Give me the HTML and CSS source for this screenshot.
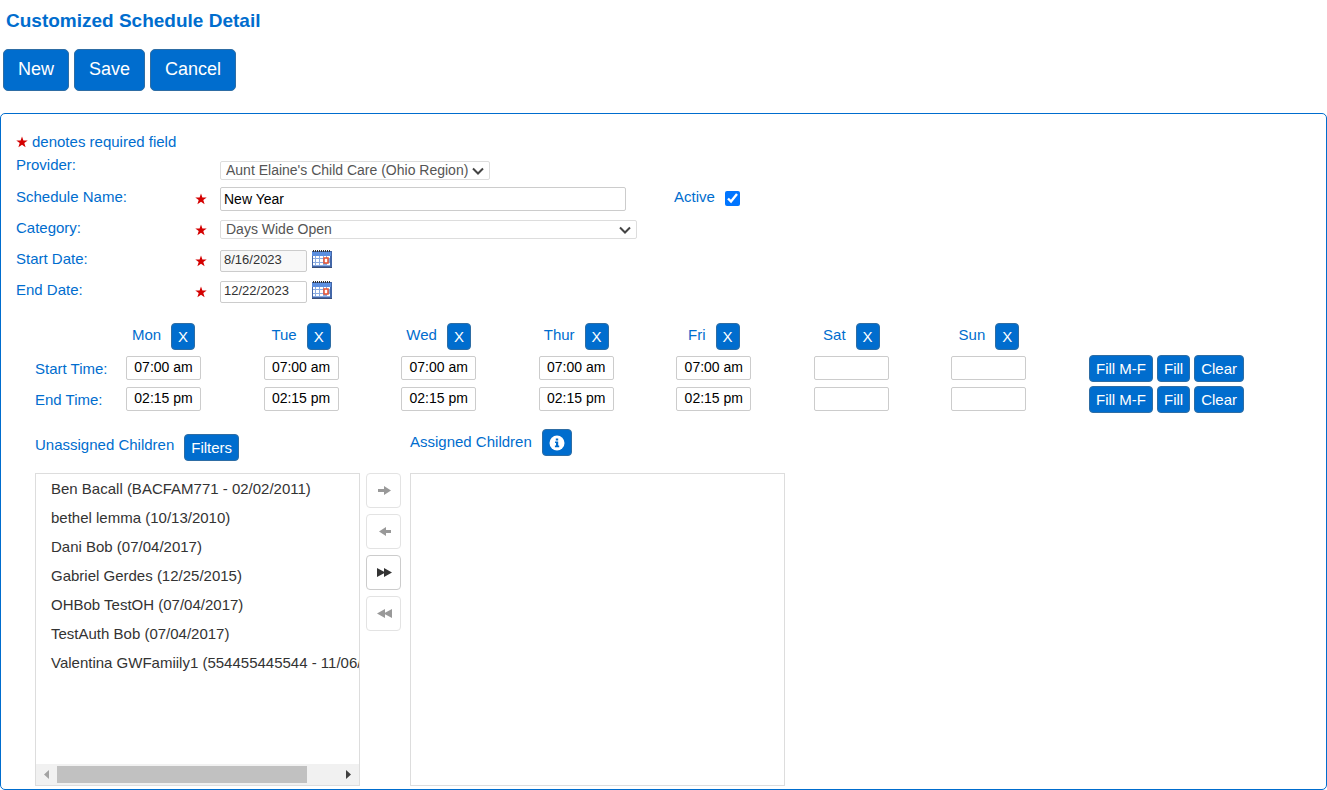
FILE: index.html
```html
<!DOCTYPE html>
<html lang="en">
<head>
  <meta charset="UTF-8" />
  <meta name="viewport" content="width=device-width, initial-scale=1.0"/>
  <title>Customized Schedule Detail</title>
  <link rel="stylesheet" href="styles.css">
</head>
<body>

<!-- shared icons -->
<svg class="sprite" aria-hidden="true">
  <symbol id="star" viewBox="0 0 12 12">
    <path fill="#d40000" d="M6 0.5 L7.4 4.4 L11.7 4.5 L8.3 7 L9.6 11.2 L6 8.7 L2.4 11.2 L3.7 7 L0.3 4.5 L4.6 4.4 Z"/>
  </symbol>
  <symbol id="calendar" viewBox="0 0 20 18">
    <rect x="0" y="1" width="20" height="17" fill="#4467a8"/>
    <rect x="0" y="2" width="19" height="4" fill="#5b8fe0"/>
    <rect x="1" y="6" width="17" height="10" fill="#8aabe0"/>
    <path fill="#fff" d="M1 6h2v2H1z M4 6h3v2H4z M8 6h3v2H8z M12 6h2v2h-2z M15 6h3v2h-3z M1 9h2v3H1z M4 9h3v3H4z M8 9h3v3H8z M1 13h2v2H1z M4 13h3v2H4z M8 13h3v2H8z M15 13h3v2h-3z"/>
    <rect x="12" y="8" width="4" height="5" fill="#fff" stroke="#e8502c" stroke-width="1.500"/>
    <path stroke="#333" stroke-width="2" stroke-dasharray="1 1" d="M1 1h18"/>
    <path stroke="#3a4f78" d="M0 17.500h20"/>
  </symbol>
</svg>

<h1>Customized Schedule Detail</h1>

<div class="toolbar">
  <button type="button" class="btn btn-lg">New</button>
  <button type="submit" form="scheduleForm" class="btn btn-lg">Save</button>
  <button type="button" class="btn btn-lg">Cancel</button>
</div>

<form id="scheduleForm" class="panel">
  <p class="note"><svg class="star"><use href="#star"/></svg> denotes required field</p>

  <div class="row row-provider">
    <label for="provider">Provider:</label>
    <select id="provider" name="provider">
      <option>Aunt Elaine's Child Care (Ohio Region)</option>
    </select>
  </div>

  <div class="row">
    <label for="scheduleName">Schedule Name:</label>
    <svg class="star"><use href="#star"/></svg>
    <input type="text" id="scheduleName" name="scheduleName" class="name" value="New Year" required>
    <label for="active" class="active">Active</label>
    <input type="checkbox" id="active" name="active" checked>
  </div>

  <div class="row">
    <label for="category">Category:</label>
    <svg class="star"><use href="#star"/></svg>
    <select id="category" name="category" class="category" required>
      <option>Days Wide Open</option>
    </select>
  </div>

  <div class="row">
    <label for="startDate">Start Date:</label>
    <svg class="star"><use href="#star"/></svg>
    <input type="text" id="startDate" name="startDate" class="date" value="8/16/2023" readonly>
    <button type="button" class="pick" aria-label="Pick start date"><svg><use href="#calendar"/></svg></button>
  </div>

  <div class="row">
    <label for="endDate">End Date:</label>
    <svg class="star"><use href="#star"/></svg>
    <input type="text" id="endDate" name="endDate" class="date" value="12/22/2023" required>
    <button type="button" class="pick" aria-label="Pick end date"><svg><use href="#calendar"/></svg></button>
  </div>

  <div class="times">
    <span></span>
    <div class="day"><span>Mon</span><button type="button" class="btn btn-x">X</button></div>
    <div class="day"><span>Tue</span><button type="button" class="btn btn-x">X</button></div>
    <div class="day"><span>Wed</span><button type="button" class="btn btn-x">X</button></div>
    <div class="day"><span>Thur</span><button type="button" class="btn btn-x">X</button></div>
    <div class="day"><span>Fri</span><button type="button" class="btn btn-x">X</button></div>
    <div class="day"><span>Sat</span><button type="button" class="btn btn-x">X</button></div>
    <div class="day"><span>Sun</span><button type="button" class="btn btn-x">X</button></div>
    <span></span>

    <label for="startMon">Start Time:</label>
    <input type="text" id="startMon" value="07:00 am">
    <input type="text" aria-label="Tue start" value="07:00 am">
    <input type="text" aria-label="Wed start" value="07:00 am">
    <input type="text" aria-label="Thur start" value="07:00 am">
    <input type="text" aria-label="Fri start" value="07:00 am">
    <input type="text" aria-label="Sat start">
    <input type="text" aria-label="Sun start">
    <div class="fill">
      <button type="button" class="btn">Fill M-F</button>
      <button type="button" class="btn">Fill</button>
      <button type="button" class="btn">Clear</button>
    </div>

    <label for="endMon">End Time:</label>
    <input type="text" id="endMon" value="02:15 pm">
    <input type="text" aria-label="Tue end" value="02:15 pm">
    <input type="text" aria-label="Wed end" value="02:15 pm">
    <input type="text" aria-label="Thur end" value="02:15 pm">
    <input type="text" aria-label="Fri end" value="02:15 pm">
    <input type="text" aria-label="Sat end">
    <input type="text" aria-label="Sun end">
    <div class="fill">
      <button type="button" class="btn">Fill M-F</button>
      <button type="button" class="btn">Fill</button>
      <button type="button" class="btn">Clear</button>
    </div>
  </div>

  <div class="children">
    <div class="head">
      <span>Unassigned Children</span>
      <button type="button" class="btn">Filters</button>
    </div>
    <div class="head head-assigned">
      <span>Assigned Children</span>
      <button type="button" class="btn btn-info" aria-label="Info">
        <svg viewBox="0 0 16 16"><circle cx="8" cy="8" r="7.500" fill="#fff"/><path fill="#006dce" d="M6.800 3.500h2.400v2H6.800z M6 6.600h3.200v4H10.200v1.600H5.900v-1.600H7V8.100H6z"/></svg>
      </button>
    </div>

    <div class="list">
      <ul>
        <li>Ben Bacall (BACFAM771 - 02/02/2011)</li>
        <li>bethel lemma (10/13/2010)</li>
        <li>Dani Bob (07/04/2017)</li>
        <li>Gabriel Gerdes (12/25/2015)</li>
        <li>OHBob TestOH (07/04/2017)</li>
        <li>TestAuth Bob (07/04/2017)</li>
        <li>Valentina GWFamiily1 (554455445544 - 11/06/2015)</li>
      </ul>
      <div class="scrollbar">
        <svg viewBox="0 0 21 21"><path fill="#a3a3a3" d="M13 6v9L8 10.500z"/></svg>
        <div class="track"><div class="thumb"></div></div>
        <svg viewBox="0 0 21 21"><path fill="#404040" d="M8 6v9l5-4.500z"/></svg>
      </div>
    </div>
    <div class="transfer">
      <button type="button" disabled aria-label="Assign"><svg viewBox="0 0 16 16"><path d="M2 6h6V3l7 4.500L8 12V9H2z"/></svg></button>
      <button type="button" disabled aria-label="Unassign"><svg viewBox="0 0 16 16"><path d="M15 6H10V3L3 7.500 10 12V9h5z"/></svg></button>
      <button type="button" aria-label="Assign all"><svg viewBox="0 0 16 16"><path d="M1 3L8 6.800V3L16 7.500 8 12V8.200L1 12z"/></svg></button>
      <button type="button" disabled aria-label="Unassign all"><svg viewBox="0 0 16 16"><path d="M16 3L9 6.800V3L1 7.500 9 12V8.200L16 12z"/></svg></button>
    </div>
    <div class="list"></div>
  </div>
</form>

</body>
</html>
```
FILE: styles.css
```css
* {
  box-sizing: border-box;
}

body {
  font-family: "Liberation Sans", Arial, sans-serif;
  font-size: 15px;
  line-height: 17px;
  margin: 0;
  color: #006dce;
  background-color: #fff;
}

h1 {
  font-size: 19px;
  line-height: 21px;
  margin: 0;
  padding: 10px 6px 18px;
}

p, ul {
  margin: 0;
  padding: 0;
}

svg {
  display: block;
}

.sprite {
  display: none;
}

input, select, button {
  font-family: inherit;
}

/* buttons */

.btn {
  height: 27px;
  padding: 0 6px;
  font-size: 15px;
  line-height: 17px;
  color: #fff;
  background-color: #006dce;
  border: 1px solid #2e6da4;
  border-radius: 4px;
  cursor: pointer;
}

.btn-lg {
  height: 42px;
  padding: 0 14px 2px;
  font-size: 18px;
  border-radius: 5px;
}

.toolbar {
  display: flex;
  gap: 5px;
  padding: 0 3px 22px;
}

/* form panel */

.panel {
  border: 1px solid #006dce;
  border-radius: 5px;
  padding: 19px 15px 3px;
}

.note {
  display: flex;
  align-items: center;
  gap: 4px;
  padding-bottom: 4px;
}

.star {
  width: 12px;
  height: 12px;
}

.row {
  display: flex;
  align-items: center;
  height: 29px;
  margin-bottom: 2px;
}

.row label {
  width: 179px;
  padding-bottom: 5px;
}

.row .star {
  margin-right: 13px;
}

.row-provider {
  align-items: flex-start;
  margin-bottom: 1px;
}

.row-provider label {
  width: 204px;
  padding-top: 2px;
}

.row-provider select {
  margin-top: 7px;
}

input[type="text"] {
  height: 24px;
  padding: 0 3px;
  font-size: 14px;
  color: #000;
  background-color: #fff;
  border: 1px solid #ccc;
  border-radius: 2px;
}

select {
  height: 19px;
  padding: 0 20px 0 5px;
  font-size: 14px;
  line-height: 17px;
  color: #555;
  background: #fff url("data:image/svg+xml,%3Csvg xmlns='http://www.w3.org/2000/svg' width='12' height='8'%3E%3Cpath d='M1 1.500l5 5 5-5' fill='none' stroke='%23444' stroke-width='2'/%3E%3C/svg%3E") no-repeat right 5px center;
  border: 1px solid #ddd;
  border-radius: 2px;
  appearance: none;
}

.row .name {
  width: 406px;
}

.row .category {
  width: 417px;
}

.row .active {
  width: auto;
  margin: 0 10px 0 48px;
}

input[type="checkbox"] {
  width: 15px;
  height: 15px;
  margin: 0;
  accent-color: #0075ff;
}

.row .date {
  width: 87px;
  height: 22px;
  padding-bottom: 2px;
  font-size: 13px;
  color: #333;
}

.row .date[readonly] {
  background-color: #f8f8f8;
}

.pick {
  padding: 0 0 4px;
  margin-left: 5px;
  background: none;
  border: none;
  cursor: pointer;
}

.pick svg {
  width: 20px;
  height: 18px;
}

/* start and end times */

.times {
  display: grid;
  grid-template-columns: 91px repeat(7, 1fr) 222px;
  row-gap: 4px;
  align-items: center;
  padding: 15px 0 0 19px;
}

.times input {
  width: 75px;
  margin-bottom: 2px;
  padding: 0 0 2px;
  text-align: center;
}

.day {
  display: flex;
  justify-content: center;
  gap: 10px;
  width: 75px;
  height: 28px;
}

.day span {
  padding-top: 3px;
}

.fill {
  display: flex;
  gap: 4px;
}

/* child lists */

.children {
  display: grid;
  grid-template-columns: 325px 35px 375px;
  grid-template-rows: 52px 313px;
  padding: 8px 0 0 19px;
  column-gap: 6px;
}

.children .list:last-child {
  margin-left: 3px;
  width: 375px;
}

.head {
  display: flex;
  gap: 10px;
  align-items: flex-start;
  padding-top: 13px;
}

.head span {
  padding-top: 2px;
}

.head-assigned {
  grid-column: 3;
  margin-left: 3px;
  padding-top: 8px;
}

.head-assigned span {
  padding-top: 4px;
}

.btn-info svg {
  width: 16px;
  height: 16px;
}

.list {
  display: flex;
  flex-direction: column;
  border: 1px solid #ddd;
  overflow: hidden;
}

.list ul {
  flex: 1;
  list-style: none;
}

.list li {
  padding: 6px 15px;
  color: #333;
  white-space: nowrap;
}

.scrollbar {
  display: flex;
  height: 21px;
  background-color: #f1f1f1;
}

.scrollbar svg {
  width: 21px;
  height: 21px;
}

.track {
  flex: 1;
  padding: 2px 0;
}

.thumb {
  width: 89%;
  height: 17px;
  background-color: #c1c1c1;
}

.transfer {
  display: flex;
  flex-direction: column;
  gap: 6px;
}

.transfer button {
  display: flex;
  align-items: center;
  justify-content: center;
  height: 35px;
  padding: 0;
  color: #333;
  background-color: #fff;
  border: 1px solid #ccc;
  border-radius: 4px;
}

.transfer button:disabled {
  color: #999;
  border-color: #e3e3e3;
}

.transfer svg {
  width: 16px;
  height: 16px;
  fill: currentColor;
}
```
